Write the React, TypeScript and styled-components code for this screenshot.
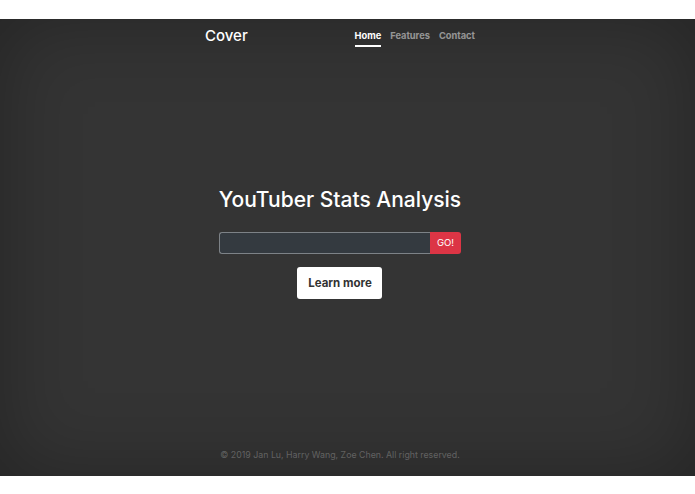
import styled, { createGlobalStyle } from 'styled-components'

const GlobalStyle = createGlobalStyle`
    html, body {
        margin: 0;
        padding: 0;
        background: #fff;
    }
    body {
        font-family: Inter, "Liberation Sans", sans-serif;
    }
`;

const App = () => {
    return (
        <>
            <GlobalStyle />
            <Page>
                <Cover>
                    <Header>
                        <Brand>Cover</Brand>
                        <Nav>
                            <NavLink active>Home</NavLink>
                            <NavLink>Features</NavLink>
                            <NavLink>Contact</NavLink>
                        </Nav>
                    </Header>
                    <Main>
                        <Title>YouTuber Stats Analysis</Title>
                        <SearchRow>
                            <SearchInput type="text" />
                            <GoButton>GO!</GoButton>
                        </SearchRow>
                        <LearnButton>Learn more</LearnButton>
                    </Main>
                    <Footer>© 2019 Jan Lu, Harry Wang, Zoe Chen. All right reserved.</Footer>
                </Cover>
            </Page>
        </>
    )
}

const Page = styled.div`
    padding: 19px 0 18px;
    background: #fff;
`;
const Cover = styled.div`
    height: 457px;
    background: #343434;
    box-shadow: inset 0 0 80px rgba(0, 0, 0, 0.3);
    display: flex;
    flex-direction: column;
    align-items: center;
    padding-right: 15px;
    box-sizing: border-box;
    color: #fff;
`;
const Header = styled.header`
    width: 270px;
    display: flex;
    justify-content: space-between;
    align-items: flex-start;
    padding-top: 7px;
`;
const Brand = styled.h3`
    margin: 0;
    font-size: 15px;
    font-weight: 500;
    line-height: 20px;
`;
const Nav = styled.nav`
    display: flex;
    gap: 9px;
    padding-top: 4px;
`;
const NavLink = styled.a<{ active?: boolean }>`
    font-size: 9.3px;
    font-weight: 700;
    line-height: 12px;
    color: ${p => p.active ? '#fff' : 'rgba(255, 255, 255, 0.5)'};
    padding-bottom: 3px;
    border-bottom: 2px solid ${p => p.active ? '#fff' : 'transparent'};
    cursor: pointer;
`;
const Main = styled.main`
    flex: 1;
    display: flex;
    flex-direction: column;
    align-items: center;
    justify-content: center;
    padding-bottom: 12px;
`;
const Title = styled.h1`
    margin: 0 0 18px;
    font-size: 21px;
    font-weight: 500;
    line-height: 28px;
`;
const SearchRow = styled.div`
    display: flex;
    width: 242px;
    height: 22px;
    margin-bottom: 13px;
`;
const SearchInput = styled.input`
    flex: 1;
    min-width: 0;
    background: #343a40;
    border: 1px solid #7d8287;
    border-right: none;
    border-radius: 3px 0 0 3px;
    outline: none;
    color: #fff;
`;
const GoButton = styled.button`
    width: 31px;
    border: none;
    background: #dc3545;
    color: #fff;
    font-family: inherit;
    font-size: 9.5px;
    border-radius: 0 3px 3px 0;
    padding: 0;
`;
const LearnButton = styled.button`
    width: 85px;
    height: 32px;
    background: #fff;
    border: none;
    border-radius: 3px;
    color: #333;
    font-family: inherit;
    font-size: 11.5px;
    font-weight: 700;
    cursor: pointer;
`;
const Footer = styled.footer`
    padding-bottom: 16px;
    font-size: 8.8px;
    color: rgba(255, 255, 255, 0.25);
`;

export default App
